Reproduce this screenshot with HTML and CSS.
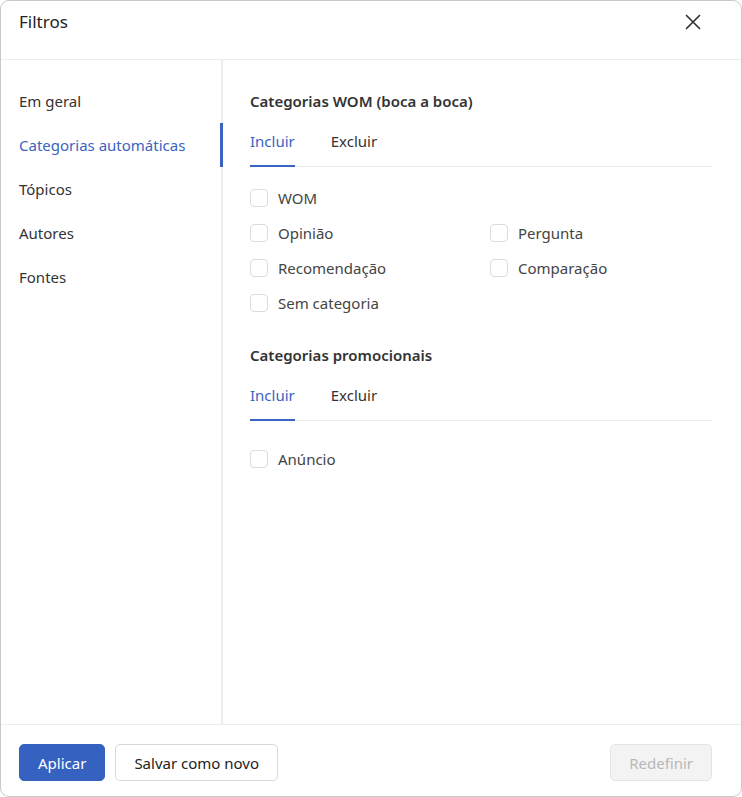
FILE: index.html
```html
<!DOCTYPE html>
<html lang="pt">
<head>
<meta charset="utf-8">
<title>Filtros</title>
<link rel="stylesheet" href="styles.css">
</head>
<body>
<div class="dialog">
  <header class="dialog-header">
    <h1 class="dialog-title">Filtros</h1>
    <button class="close-btn" aria-label="Fechar">
      <svg width="16" height="16" viewBox="0 0 16 16"><path d="M1.5 1.5 L14.5 14.5 M14.5 1.5 L1.5 14.5" stroke="#333" stroke-width="1.7" stroke-linecap="round" fill="none"/></svg>
    </button>
  </header>
  <div class="dialog-body">
    <nav class="sidebar">
      <a class="nav-item">Em geral</a>
      <a class="nav-item active">Categorias automáticas</a>
      <a class="nav-item">Tópicos</a>
      <a class="nav-item">Autores</a>
      <a class="nav-item">Fontes</a>
    </nav>
    <main class="content">
      <section class="group">
        <h2 class="group-title">Categorias WOM (boca a boca)</h2>
        <div class="tabs">
          <span class="tab active">Incluir</span>
          <span class="tab">Excluir</span>
        </div>
        <div class="options">
          <label class="option full"><span class="box"></span>WOM</label>
          <label class="option"><span class="box"></span>Opinião</label>
          <label class="option"><span class="box"></span>Pergunta</label>
          <label class="option"><span class="box"></span>Recomendação</label>
          <label class="option"><span class="box"></span>Comparação</label>
          <label class="option full"><span class="box"></span>Sem categoria</label>
        </div>
      </section>
      <section class="group">
        <h2 class="group-title">Categorias promocionais</h2>
        <div class="tabs">
          <span class="tab active">Incluir</span>
          <span class="tab">Excluir</span>
        </div>
        <div class="options single">
          <label class="option full"><span class="box"></span>Anúncio</label>
        </div>
      </section>
    </main>
  </div>
  <footer class="dialog-footer">
    <button class="btn btn-primary">Aplicar</button>
    <button class="btn btn-secondary">Salvar como novo</button>
    <span class="spacer"></span>
    <button class="btn btn-disabled" disabled>Redefinir</button>
  </footer>
</div>
</body>
</html>
```

FILE: styles.css
```css
* { box-sizing: border-box; }
html, body { margin: 0; padding: 0; background: #fff; }
body {
  font-family: "Noto Sans", "Open Sans", sans-serif;
  font-size: 15px;
  color: #333;
}
.dialog {
  width: 742px;
  height: 797px;
  border: 1px solid #c9c9c9;
  border-radius: 9px;
  display: flex;
  flex-direction: column;
  overflow: hidden;
  background: #fff;
}
.dialog-header {
  height: 59px;
  flex: none;
  display: flex;
  align-items: center;
  justify-content: space-between;
  padding: 0 40px 0 18px;
  border-bottom: 1px solid #ececec;
}
.dialog-title {
  margin: 0 0 17px 0;
  font-size: 17px;
  font-weight: 400;
  color: #222;
}
.close-btn {
  border: 0;
  background: none;
  padding: 0;
  margin-bottom: 16px;
  width: 16px;
  height: 16px;
  display: flex;
}
.dialog-body {
  flex: 1;
  display: flex;
  min-height: 0;
}
.sidebar {
  width: 222px;
  flex: none;
  border-right: 2px solid #ececec;
  padding-top: 19px;
  display: flex;
  flex-direction: column;
}
.nav-item {
  display: block;
  height: 44px;
  line-height: 22px;
  padding: 11px 18px;
  color: #333;
  font-size: 15px;
  margin-right: -2px;
  border-right: 3px solid transparent;
}
.nav-item.active {
  color: #3a63c2;
  border-right-color: #3a63c2;
}
.content {
  flex: 1;
  padding: 31px 29px 0 27px;
}
.group { margin-bottom: 32px; }
.group-title {
  margin: 0;
  font-size: 15px;
  font-weight: 600;
  line-height: 20px;
  color: #333;
}
.tabs {
  margin-top: 20px;
  display: flex;
  gap: 36px;
  border-bottom: 1px solid #ececec;
}
.tab {
  font-size: 15px;
  line-height: 20px;
  padding-bottom: 14px;
  border-bottom: 2px solid transparent;
  margin-bottom: -1px;
}
.tab.active {
  color: #3a63c2;
  border-bottom-color: #3a63c2;
}
.options {
  margin-top: 21px;
  display: grid;
  grid-template-columns: 240px 1fr;
  row-gap: 15px;
}
.options.single { margin-top: 28px; }
.option {
  display: flex;
  align-items: center;
  gap: 10px;
  font-size: 15px;
  line-height: 20px;
  color: #444;
}
.option.full { grid-column: 1 / -1; }
.box {
  width: 18px;
  height: 18px;
  border: 1px solid #dcdcdc;
  border-radius: 4px;
  background: #fff;
  flex: none;
}
.dialog-footer {
  flex: none;
  height: 72px;
  border-top: 1px solid #ececec;
  display: flex;
  align-items: flex-start;
  padding: 19px 29px 0 18px;
  gap: 10px;
}
.spacer { flex: 1; }
.btn {
  height: 37px;
  border-radius: 5px;
  font-family: inherit;
  font-size: 15px;
  padding: 0 18px;
  border: 1px solid #d9d9d9;
  background: #fff;
  color: #222;
}
.btn-primary {
  background: #3561c1;
  border-color: #3561c1;
  color: #fff;
}
.btn-disabled {
  background: #f3f3f3;
  border-color: #e3e3e3;
  color: #b8b8b8;
}
```
